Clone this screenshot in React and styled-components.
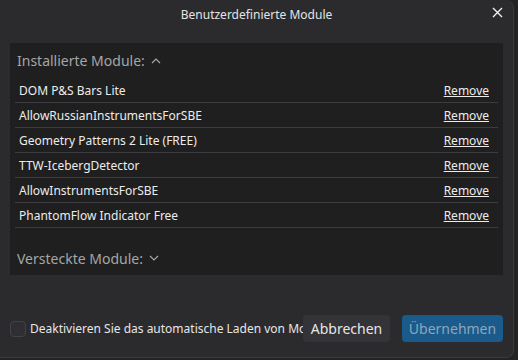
import React from 'react';
import styled, { createGlobalStyle } from 'styled-components';

const Global = createGlobalStyle`
    body {
        margin: 0;
        background-color: #232325;
        font-family: "Segoe UI", "Noto Sans", "Liberation Sans", sans-serif;
    }
`;

const Dialog = styled.div`
    box-sizing: border-box;
    width: 514px;
    height: 358px;
    display: flex;
    flex-direction: column;
    background-color: #2b2b2e;
    border-right: 1px solid #3a3a3e;
    border-bottom: 1px solid #3a3a3e;
    border-radius: 0 8px 8px 0;
`;

const Header = styled.div`
    display: grid;
    grid-template-columns: 1fr auto 1fr;
    height: 43px;
    padding: 6px 9px 0 9px;
    box-sizing: border-box;
`;

const Title = styled.div`
    grid-column: 2;
    font-size: 12px;
    line-height: 18px;
    color: #e4e4e4;
`;

const Close = styled.button`
    grid-column: 3;
    justify-self: end;
    align-self: start;
    width: 14px;
    height: 14px;
    padding: 0;
    margin-top: -1px;
    border: none;
    background: none;
    display: flex;
    align-items: center;
    justify-content: center;
`;

const Panel = styled.div`
    margin: 0 10px;
    height: 232px;
    background-color: #1f1f1f;
    padding: 0 5px;
    display: flex;
    flex-direction: column;
`;

const SectionHead = styled.div`
    display: flex;
    align-items: center;
    gap: 6px;
    height: ${p => p.$height || 34}px;
    padding-left: 2px;
    margin-top: ${p => p.$offset || 0}px;
    font-size: 14px;
    color: #a6a6a6;
`;

const Row = styled.div`
    display: flex;
    align-items: center;
    justify-content: space-between;
    height: 24px;
    padding: 0 9px 0 4px;
    border-bottom: 1px solid #3c3c40;
    font-size: 12px;
    color: #ececec;
`;

const RemoveLink = styled.a`
    color: #ececec;
    text-decoration: underline;
    cursor: pointer;
`;

const Footer = styled.div`
    margin-top: auto;
    display: flex;
    align-items: center;
    padding: 0 10px 15px 10px;
`;

const Check = styled.span`
    flex: none;
    box-sizing: border-box;
    width: 16px;
    height: 16px;
    border: 1px solid #414146;
    border-radius: 4px;
    background-color: #2f2f33;
`;

const Label = styled.span`
    flex: 1;
    min-width: 0;
    margin-left: 4px;
    overflow: hidden;
    white-space: nowrap;
    font-size: 12px;
    color: #e6e6e6;
`;

const Button = styled.button`
    flex: none;
    height: 27px;
    width: ${p => p.$width}px;
    margin-left: ${p => p.$gap || 0}px;
    border: none;
    border-radius: 4px;
    font-family: inherit;
    font-size: 14px;
    background-color: ${p => p.$primary ? '#1a5b8c' : '#333338'};
    color: ${p => p.$primary ? '#8ea6b9' : '#e6e6e6'};
`;

const Chevron = ({ up }) => (
    <svg width="10" height="6" viewBox="0 0 10 6">
        <path d={up ? 'M1 5 L5 1 L9 5' : 'M1 1 L5 5 L9 1'} fill="none" stroke="#a6a6a6" strokeWidth="1.2" />
    </svg>
);

const modules = [
    'DOM P&S Bars Lite',
    'AllowRussianInstrumentsForSBE',
    'Geometry Patterns 2 Lite (FREE)',
    'TTW-IcebergDetector',
    'AllowInstrumentsForSBE',
    'PhantomFlow Indicator Free',
];

export default function App() {
    return (
        <>
            <Global />
            <Dialog>
                <Header>
                    <Title>Benutzerdefinierte Module</Title>
                    <Close>
                        <svg width="11" height="11" viewBox="0 0 11 11">
                            <path d="M1 1 L10 10 M10 1 L1 10" stroke="#f0f0f0" strokeWidth="1.4" />
                        </svg>
                    </Close>
                </Header>
                <Panel>
                    <SectionHead $height={35}>
                        Installierte Module: <Chevron up />
                    </SectionHead>
                    {modules.map(name => (
                        <Row key={name}>
                            <span>{name}</span>
                            <RemoveLink>Remove</RemoveLink>
                        </Row>
                    ))}
                    <SectionHead $offset={13}>
                        Versteckte Module: <Chevron />
                    </SectionHead>
                </Panel>
                <Footer>
                    <Check />
                    <Label>Deaktivieren Sie das automatische Laden von Modulen</Label>
                    <Button $width={87}>Abbrechen</Button>
                    <Button $width={101} $gap={12} $primary>Übernehmen</Button>
                </Footer>
            </Dialog>
        </>
    );
}
